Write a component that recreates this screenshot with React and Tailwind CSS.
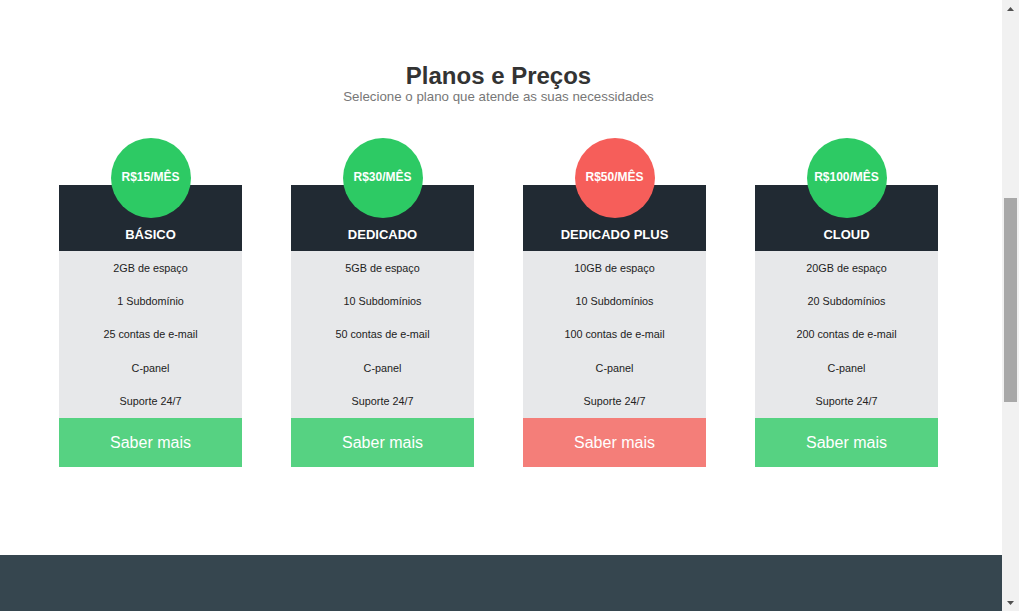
const plans = [
  {
    price: 'R$15/MÊS',
    name: 'BÁSICO',
    features: ['2GB de espaço', '1 Subdomínio', '25 contas de e-mail', 'C-panel', 'Suporte 24/7'],
  },
  {
    price: 'R$30/MÊS',
    name: 'DEDICADO',
    features: ['5GB de espaço', '10 Subdomínios', '50 contas de e-mail', 'C-panel', 'Suporte 24/7'],
  },
  {
    price: 'R$50/MÊS',
    name: 'DEDICADO PLUS',
    featured: true,
    features: ['10GB de espaço', '10 Subdomínios', '100 contas de e-mail', 'C-panel', 'Suporte 24/7'],
  },
  {
    price: 'R$100/MÊS',
    name: 'CLOUD',
    features: ['20GB de espaço', '20 Subdomínios', '200 contas de e-mail', 'C-panel', 'Suporte 24/7'],
  },
];

export default function App() {
  return (
    <div className="flex h-[611px] w-[1019px] overflow-hidden bg-white font-['Liberation_Sans',Arial,sans-serif]">
      <div className="flex flex-1 flex-col">
        <section className="flex flex-1 flex-col items-center pr-[5px] pt-[63px]">
          <h1 className="text-[24px] font-bold leading-[26px] text-[#333]">Planos e Preços</h1>
          <p className="text-[13.3px] leading-[16px] text-[#777]">Selecione o plano que atende as suas necessidades</p>

          <div className="mt-[33px] flex w-full gap-[49px] pl-[59px]">
            {plans.map((p) => (
              <PlanCard key={p.name} plan={p} />
            ))}
          </div>
        </section>
        <footer className="h-[56px] bg-[#36464f]" />
      </div>
      <Scrollbar />
    </div>
  );
}

function PlanCard({ plan }) {
  return (
    <div className="flex w-[183px] flex-col items-center">
      <div
        className={
          'relative z-10 flex h-20 w-20 items-center justify-center rounded-full text-[12px] font-bold text-white ' +
          (plan.featured ? 'bg-[#f65e5a]' : 'bg-[#2dca64]')
        }
      >
        <span className="-mt-[2px]">{plan.price}</span>
      </div>
      <div className="-mt-[33px] flex h-[66px] w-full items-end justify-center bg-[#212a33] pb-[9px] text-[13px] font-bold leading-[15px] text-white">
        {plan.name}
      </div>
      <ul className="flex h-[167px] w-full flex-col bg-[#e7e8ea]">
        {plan.features.map((f) => (
          <li key={f} className="flex flex-1 items-center justify-center text-[10.8px] text-[#222]">
            {f}
          </li>
        ))}
      </ul>
      <button
        className={
          'flex h-[49px] w-full items-center justify-center text-[16px] text-white ' +
          (plan.featured ? 'bg-[#f47e79]' : 'bg-[#56d282]')
        }
      >
        Saber mais
      </button>
    </div>
  );
}

function Scrollbar() {
  return (
    <div className="flex w-[17px] flex-col items-center bg-[#f1f1f1]">
      <div className="flex h-[17px] items-center justify-center">
        <svg width="7" height="4" viewBox="0 0 7 4">
          <path d="M0 4 L3.5 0 L7 4 Z" fill="#505050" />
        </svg>
      </div>
      <div className="mt-[181px] h-[204px] w-[13px] bg-[#a8a8a8]" />
      <div className="flex-1" />
      <div className="flex h-[17px] items-center justify-center">
        <svg width="7" height="4" viewBox="0 0 7 4">
          <path d="M0 0 L7 0 L3.5 4 Z" fill="#505050" />
        </svg>
      </div>
    </div>
  );
}
